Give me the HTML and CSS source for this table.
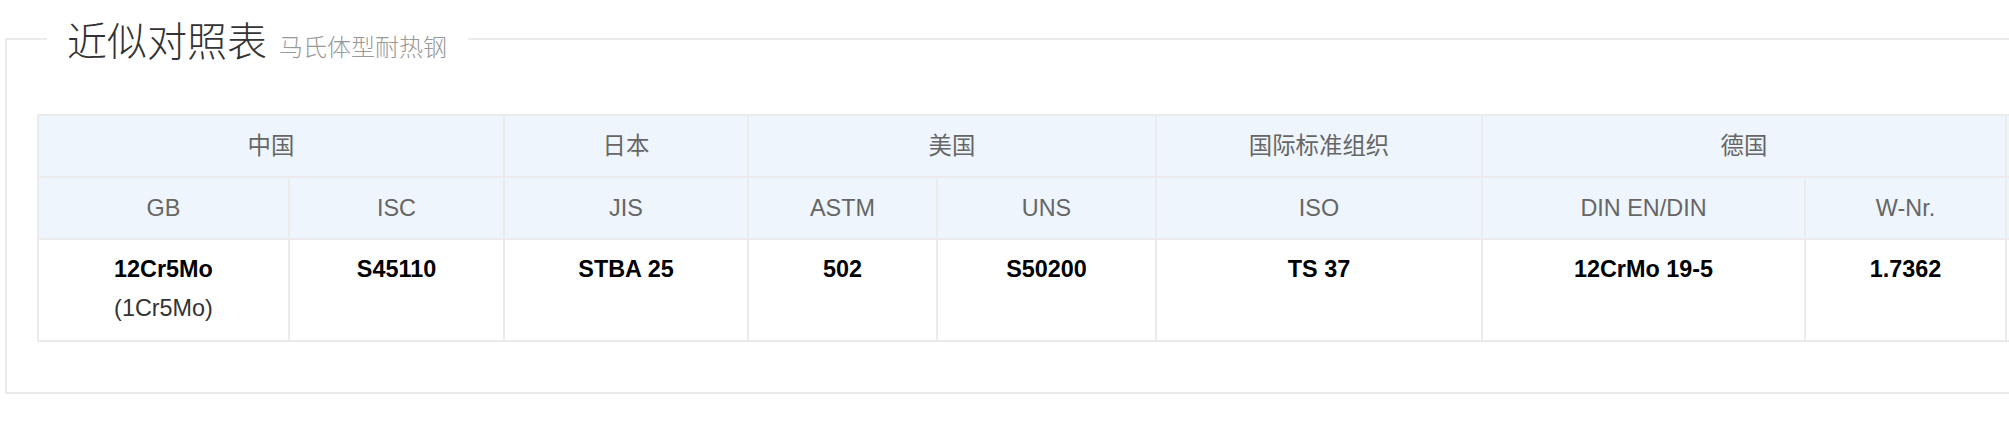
FILE: index.html
```html
<!DOCTYPE html>
<html lang="zh-CN">
<head>
<meta charset="utf-8">
<title>近似对照表</title>
<link rel="stylesheet" href="styles.css">
</head>
<body>
<div class="page">
  <fieldset class="panel">
    <legend class="panel-title"><span class="title-main">近似对照表</span><span class="title-sub">马氏体型耐热钢</span></legend>
    <table class="grade-table">
      <colgroup>
        <col class="w-gb"><col class="w-isc"><col class="w-jis"><col class="w-astm"><col class="w-uns"><col class="w-iso"><col class="w-din"><col class="w-wnr"><col class="w-more">
      </colgroup>
      <thead>
        <tr class="row-country">
          <th colspan="2">中国</th>
          <th>日本</th>
          <th colspan="2">美国</th>
          <th>国际标准组织</th>
          <th colspan="2">德国</th>
          <th></th>
        </tr>
        <tr class="row-std">
          <th>GB</th>
          <th>ISC</th>
          <th>JIS</th>
          <th>ASTM</th>
          <th>UNS</th>
          <th>ISO</th>
          <th>DIN EN/DIN</th>
          <th>W-Nr.</th>
          <th></th>
        </tr>
      </thead>
      <tbody>
        <tr>
          <td><span class="grade">12Cr5Mo</span><br><span class="alt">(1Cr5Mo)</span></td>
          <td><span class="grade">S45110</span></td>
          <td><span class="grade">STBA 25</span></td>
          <td><span class="grade">502</span></td>
          <td><span class="grade">S50200</span></td>
          <td><span class="grade">TS 37</span></td>
          <td><span class="grade">12CrMo 19-5</span></td>
          <td><span class="grade">1.7362</span></td>
          <td></td>
        </tr>
      </tbody>
    </table>
  </fieldset>
</div>
</body>
</html>
```

FILE: styles.css
```css
html, body {
  margin: 0;
  padding: 0;
  background: #ffffff;
  overflow: hidden;
}

body {
  font-family: "Liberation Sans", "Noto Sans CJK SC", sans-serif;
  color: #333333;
}

.page {
  padding: 15px 0 0 5px;
}

.panel {
  box-sizing: border-box;
  width: 2400px;
  min-width: 0;
  margin: 0;
  border: 2px solid #ebebeb;
  padding: 51px 0 50px 30px;
}

.panel-title {
  margin-left: 10px;
  padding: 0 21px 0 20px;
  height: 48px;
  line-height: 48px;
  font-family: "Noto Sans CJK SC", "Liberation Sans", sans-serif;
  white-space: nowrap;
}

.title-main {
  font-size: 40px;
  font-weight: 300;
  color: #333333;
}

.title-sub {
  margin-left: 12px;
  font-size: 24px;
  font-weight: 300;
  color: #999999;
}

.grade-table {
  border-collapse: collapse;
  table-layout: fixed;
  width: 2268px;
  border: 2px solid #ebebeb;
  font-size: 23.4px;
}

.w-gb { width: 251px; }
.w-isc { width: 215px; }
.w-jis { width: 244px; }
.w-astm { width: 189px; }
.w-uns { width: 219px; }
.w-iso { width: 326px; }
.w-din { width: 323px; }
.w-wnr { width: 201px; }
.w-more { width: 300px; }

.grade-table th,
.grade-table td {
  border: 2px solid #ebebeb;
  text-align: center;
  padding: 0;
}

.grade-table th {
  background: #eef5fc;
  color: #666666;
  font-weight: 400;
  line-height: 60px;
  height: 60px;
  white-space: nowrap;
}

.grade-table td {
  vertical-align: top;
  padding: 10px 0 12px;
  line-height: 39px;
  height: 78px;
  background: #ffffff;
}

.grade {
  font-weight: 700;
  color: #000000;
}

.alt {
  font-weight: 400;
  color: #333333;
}
```
